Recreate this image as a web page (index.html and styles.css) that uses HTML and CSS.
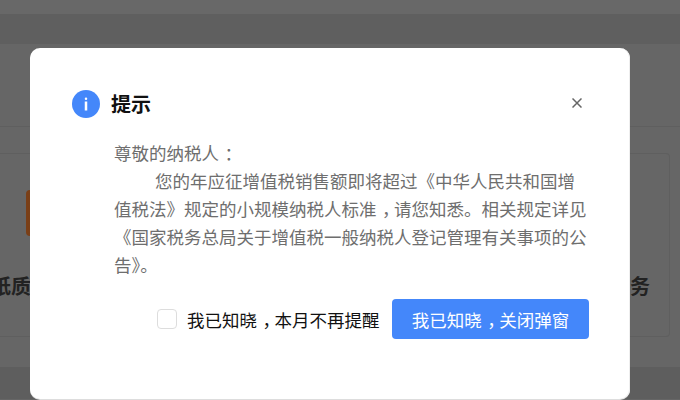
FILE: index.html
```html
<!DOCTYPE html>
<html lang="zh-CN">
<head>
<meta charset="utf-8">
<title>提示</title>
<link rel="stylesheet" href="styles.css">
</head>
<body>
<div class="page">
  <div class="strip-top"></div>
  <div class="strip-nav"></div>
  <div class="band"></div>
  <div class="cards">
    <div class="item item-left">
      <div class="tile"></div>
      <div class="label">纸质</div>
    </div>
    <div class="item item-right">
      <div class="label">务</div>
    </div>
  </div>
  <div class="strip-foot"></div>
</div>
<div class="modal">
  <div class="head">
    <svg class="info" width="28" height="28" viewBox="0 0 28 28" aria-hidden="true">
      <circle cx="14" cy="14" r="14" fill="#4487fa"/>
      <rect x="12.75" y="7.5" width="2.5" height="2.5" rx="1.2" fill="#fff"/>
      <rect x="12.75" y="11.5" width="2.5" height="9" fill="#fff"/>
    </svg>
    <h2 class="title">提示</h2>
    <svg class="close" width="10" height="10" viewBox="0 0 10 10" aria-hidden="true">
      <path d="M0.5 0.5L9.5 9.5M9.5 0.5L0.5 9.5" stroke="#666" stroke-width="1.5" fill="none"/>
    </svg>
  </div>
  <div class="body">
    <p class="line">尊敬的纳税人<span class="p">：</span></p>
    <p class="line indent">您的年应征增值税销售额即将超过《中华人民共和国增值税法》规定的小规模纳税人标准<span class="p">，</span>请您知悉。相关规定详见《国家税务总局关于增值税一般纳税人登记管理有关事项的公告》。</p>
  </div>
  <div class="foot">
    <label class="check"><span class="box"></span><span>我已知晓<span class="p">，</span>本月不再提醒</span></label>
    <button class="btn" type="button">我已知晓<span class="p">，</span>关闭弹窗</button>
  </div>
</div>
</body>
</html>
```
FILE: styles.css
```css
html, body {
  margin: 0;
  padding: 0;
  height: 400px;
  overflow: hidden;
  background: #666;
  font-family: "Noto Sans CJK SC", "Liberation Sans", sans-serif;
}
.page {
  height: 400px;
  background: #666;
  overflow: hidden;
}
.strip-top { height: 14px; background: #686868; }
.strip-nav { height: 30px; background: #5f5f5f; }
.band { height: 82px; border-bottom: 1px solid #5f5f5f; margin-bottom: 26px; }
.cards {
  height: 182px;
  margin-right: 10px;
  border: 1px solid #5f5f5f;
  border-left: 0;
  border-radius: 0 4px 4px 0;
  display: flex;
  justify-content: space-between;
}
.item-left { margin-left: -9px; }
.item-right { padding-top: 120px; margin-right: 19px; }
.tile {
  width: 46px;
  height: 46px;
  margin: 36px 0 38px 35px;
  background: #7a3f17;
  border-radius: 4px;
}
.label {
  font-size: 20px;
  line-height: 24px;
  font-weight: 700;
  color: #222;
}
.strip-foot { height: 32px; margin-top: 30px; background: #5e5e5e; }
.modal {
  position: absolute;
  left: 30px;
  top: 48px;
  width: 600px;
  height: 351px;
  box-sizing: border-box;
  background: #fff;
  border-radius: 10px;
  box-shadow: 0 1px 0 #ddd, inset -1px 0 0 #eee;
  padding: 42px 41px 0 42px;
}
.head { display: flex; align-items: center; height: 28px; }
.info { flex: none; margin-right: 11px; }
.title {
  flex: 1;
  margin: 0;
  font-size: 20px;
  line-height: 28px;
  font-weight: 700;
  color: #111;
}
.close { flex: none; margin: -2px 7px 0 0; }
.body {
  margin: 21px 0 0 42px;
  font-size: 17.5px;
  line-height: 28px;
  color: #6e6e6e;
}
.line { margin: 0; }
.indent { text-indent: 41px; }
.p { margin-left: 0.32em; letter-spacing: -0.32em; }
.foot {
  margin-top: 20px;
  display: flex;
  justify-content: flex-end;
  align-items: center;
}
.check {
  display: flex;
  align-items: center;
  font-size: 17.5px;
  color: #111;
  margin-right: 12.5px;
}
.box {
  width: 18px;
  height: 18px;
  margin-right: 10px;
  background: #fff;
  border: 1px solid #ddd;
  border-radius: 4px;
}
.btn {
  width: 197px;
  height: 40px;
  padding: 0;
  border: 0;
  border-radius: 4px;
  background: #4487fa;
  color: #fff;
  font: inherit;
  font-size: 17.5px;
}
```
